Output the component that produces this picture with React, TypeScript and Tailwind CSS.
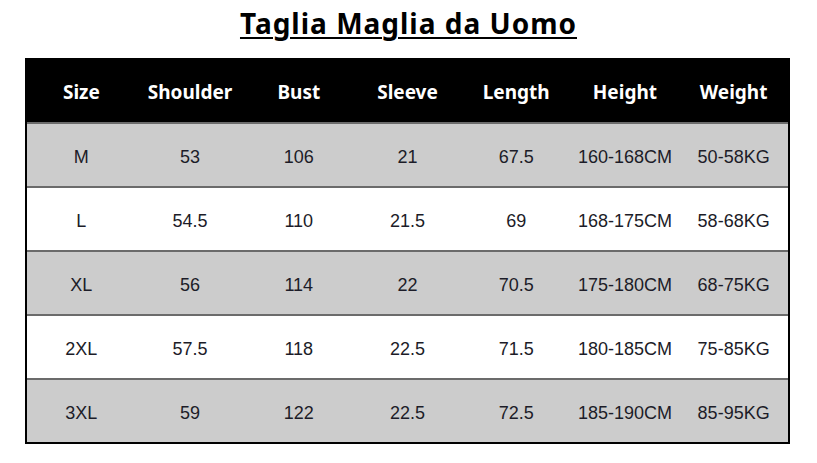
import React from 'react';

const headers = ['Size', 'Shoulder', 'Bust', 'Sleeve', 'Length', 'Height', 'Weight'];

const rows: string[][] = [
  ['M', '53', '106', '21', '67.5', '160-168CM', '50-58KG'],
  ['L', '54.5', '110', '21.5', '69', '168-175CM', '58-68KG'],
  ['XL', '56', '114', '22', '70.5', '175-180CM', '68-75KG'],
  ['2XL', '57.5', '118', '22.5', '71.5', '180-185CM', '75-85KG'],
  ['3XL', '59', '122', '22.5', '72.5', '185-190CM', '85-95KG'],
];

export default function App() {
  return (
    <div className="w-[817px] h-[463px] bg-white">
      <div className="h-[58px] flex justify-center pt-[5px]">
        <h1 className="text-[28px] leading-[36px] font-bold tracking-[1px] text-black underline decoration-2 underline-offset-[3px] font-['Noto_Sans',sans-serif]">
          Taglia Maglia da Uomo
        </h1>
      </div>
      <div className="ml-[25px] w-[765px] border-x-2 border-b-2 border-black">
        <div className="grid grid-cols-7 h-[64px] bg-black">
          {headers.map((h) => (
            <div
              key={h}
              className="flex items-center justify-center pt-[4px] text-white text-[19px] font-bold font-['Noto_Sans',sans-serif]"
            >
              {h}
            </div>
          ))}
        </div>
        {rows.map((r, i) => (
          <div
            key={r[0]}
            className={`grid grid-cols-7 h-[64px] border-t-2 border-[#6b6b6b] ${
              i % 2 === 0 ? 'bg-[#cccccc]' : 'bg-white'
            }`}
          >
            {r.map((c, j) => (
              <div
                key={j}
                className="flex items-center justify-center pt-[5px] text-[18px] text-[#1c1c28] font-['Liberation_Sans',Arial,sans-serif]"
              >
                {c}
              </div>
            ))}
          </div>
        ))}
      </div>
    </div>
  );
}
